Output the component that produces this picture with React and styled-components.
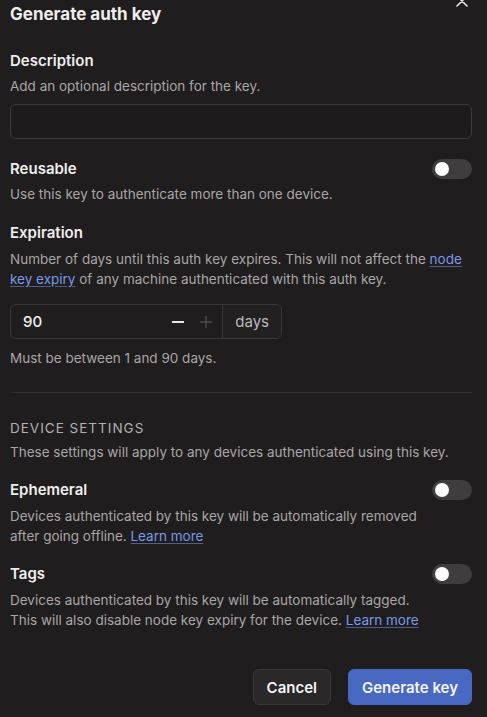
import React, { useState } from 'react';
import styled, { createGlobalStyle } from 'styled-components';

const GlobalStyle = createGlobalStyle`
  html, body {
    margin: 0;
    background: #1f1d1e;
  }
  body {
    font-family: Inter, "Noto Sans", sans-serif;
    color: #efedee;
  }
`;

const Dialog = styled.div`
  padding: 0 15px 0 10px;
  height: 717px;
  overflow: hidden;
  box-sizing: border-box;
`;

const Header = styled.div`
  display: flex;
  justify-content: space-between;
  align-items: flex-start;
  height: 28px;
`;

const Title = styled.h2`
  margin: 0;
  font-size: 17px;
  line-height: 28px;
  font-weight: 700;
`;

const CloseButton = styled.button`
  background: none;
  border: 0;
  padding: 0;
  margin: -5px 4px 0 0;
  color: #e8e6e7;
  display: flex;
`;

const Section = styled.div`
  margin-top: ${p => p.$gap || 17}px;
`;

const LabelRow = styled.div`
  display: flex;
  justify-content: space-between;
  align-items: center;
`;

const Label = styled.div`
  font-size: 15px;
  line-height: 24px;
  font-weight: 600;
`;

const Help = styled.p`
  margin: ${p => p.$top ?? 3}px 0 0;
  font-size: 13.5px;
  line-height: 20px;
  color: #a9a6a7;
  max-width: ${p => p.$max || 'none'};
`;

const Link = styled.a`
  color: #7b98e6;
  text-decoration: underline;
  text-decoration-color: #4d5f8f;
  text-underline-offset: 2px;
`;

const TextInput = styled.input`
  display: block;
  box-sizing: border-box;
  width: 100%;
  height: 35px;
  margin-top: 8px;
  background: #1d1b1c;
  border: 1px solid #3e3b3c;
  border-radius: 6px;
  outline: none;
  color: #efedee;
`;

const Track = styled.button`
  width: 40px;
  height: 20px;
  border-radius: 10px;
  border: 0;
  padding: 0 3px;
  background: #403d3e;
  display: flex;
  align-items: center;
  cursor: pointer;
`;

const Knob = styled.span`
  width: 14px;
  height: 14px;
  border-radius: 50%;
  background: #ffffff;
`;

const NumberField = styled.div`
  display: flex;
  width: 272px;
  height: 35px;
  margin-top: 15px;
  border: 1px solid #3a3738;
  border-radius: 6px;
  box-sizing: border-box;
  overflow: hidden;
`;

const NumberValue = styled.div`
  flex: 1;
  display: flex;
  align-items: center;
  gap: 16px;
  padding: 0 10px 0 12px;
  font-size: 15px;
  font-weight: 500;
  color: #f2f0f1;
`;

const Value = styled.span`
  flex: 1;
`;

const Stepper = styled.span`
  display: flex;
  color: ${p => (p.$dim ? '#4f4c4d' : '#e6e4e5')};
`;

const Addon = styled.div`
  display: flex;
  align-items: center;
  padding: 0 12px 0 12px;
  border-left: 1px solid #3a3738;
  background: #222021;
  font-size: 15px;
  color: #bdbabb;
`;

const Divider = styled.hr`
  margin: 24px 0 0 2px;
  border: 0;
  border-top: 1px solid #343132;
`;

const Overline = styled.div`
  margin-top: 25px;
  font-size: 13.5px;
  line-height: 20px;
  letter-spacing: 1px;
  text-transform: uppercase;
  color: #b3b0b1;
`;

const Footer = styled.div`
  display: flex;
  justify-content: flex-end;
  gap: 17px;
  margin-top: 39px;
`;

const Button = styled.button`
  height: 36px;
  padding: 0 13px;
  min-width: ${p => (p.$primary ? 123 : 77)}px;
  border-radius: 6px;
  border: 1px solid ${p => (p.$primary ? '#4868c1' : '#3a3738')};
  background: ${p => (p.$primary ? '#4868c1' : '#2a2829')};
  color: #f4f3f3;
  font-family: inherit;
  font-size: 15px;
  font-weight: 600;
  cursor: pointer;
`;

function Toggle() {
  const [on, setOn] = useState(false);
  return (
    <Track onClick={() => setOn(!on)} style={{ justifyContent: on ? 'flex-end' : 'flex-start' }}>
      <Knob />
    </Track>
  );
}

function XIcon() {
  return (
    <svg width="12" height="12" viewBox="0 0 12 12" fill="none" stroke="currentColor" strokeWidth="1.6" strokeLinecap="round">
      <path d="M1 1l10 10M11 1L1 11" />
    </svg>
  );
}

function MinusIcon() {
  return (
    <svg width="12" height="12" viewBox="0 0 12 12" stroke="currentColor" strokeWidth="1.8">
      <path d="M0 6h12" />
    </svg>
  );
}

function PlusIcon() {
  return (
    <svg width="12" height="12" viewBox="0 0 12 12" stroke="currentColor" strokeWidth="1.4">
      <path d="M0 6h12M6 0v12" />
    </svg>
  );
}

export default function App() {
  return (
    <Dialog>
      <GlobalStyle />
      <Header>
        <Title>Generate auth key</Title>
        <CloseButton><XIcon /></CloseButton>
      </Header>

      <Section $gap={21}>
        <Label>Description</Label>
        <Help>Add an optional description for the key.</Help>
        <TextInput type="text" />
      </Section>

      <Section $gap={18}>
        <LabelRow>
          <Label>Reusable</Label>
          <Toggle />
        </LabelRow>
        <Help $top={3}>Use this key to authenticate more than one device.</Help>
      </Section>

      <Section>
        <Label>Expiration</Label>
        <Help $top={4}>
          Number of days until this auth key expires. This will not affect the <Link href="#">node key expiry</Link> of any machine authenticated with this auth key.
        </Help>
        <NumberField>
          <NumberValue>
            <Value>90</Value>
            <Stepper><MinusIcon /></Stepper>
            <Stepper $dim><PlusIcon /></Stepper>
          </NumberValue>
          <Addon>days</Addon>
        </NumberField>
        <Help $top={9}>Must be between 1 and 90 days.</Help>
      </Section>

      <Divider />
      <Overline>Device settings</Overline>
      <Help $top={4}>These settings will apply to any devices authenticated using this key.</Help>

      <Section $gap={16}>
        <LabelRow>
          <Label>Ephemeral</Label>
          <Toggle />
        </LabelRow>
        <Help $top={4} $max="425px">
          Devices authenticated by this key will be automatically removed after going offline. <Link href="#">Learn more</Link>
        </Help>
      </Section>

      <Section $gap={16}>
        <LabelRow>
          <Label>Tags</Label>
          <Toggle />
        </LabelRow>
        <Help $top={4} $max="425px">
          Devices authenticated by this key will be automatically tagged. This will also disable node key expiry for the device. <Link href="#">Learn more</Link>
        </Help>
      </Section>

      <Footer>
        <Button>Cancel</Button>
        <Button $primary>Generate key</Button>
      </Footer>
    </Dialog>
  );
}
